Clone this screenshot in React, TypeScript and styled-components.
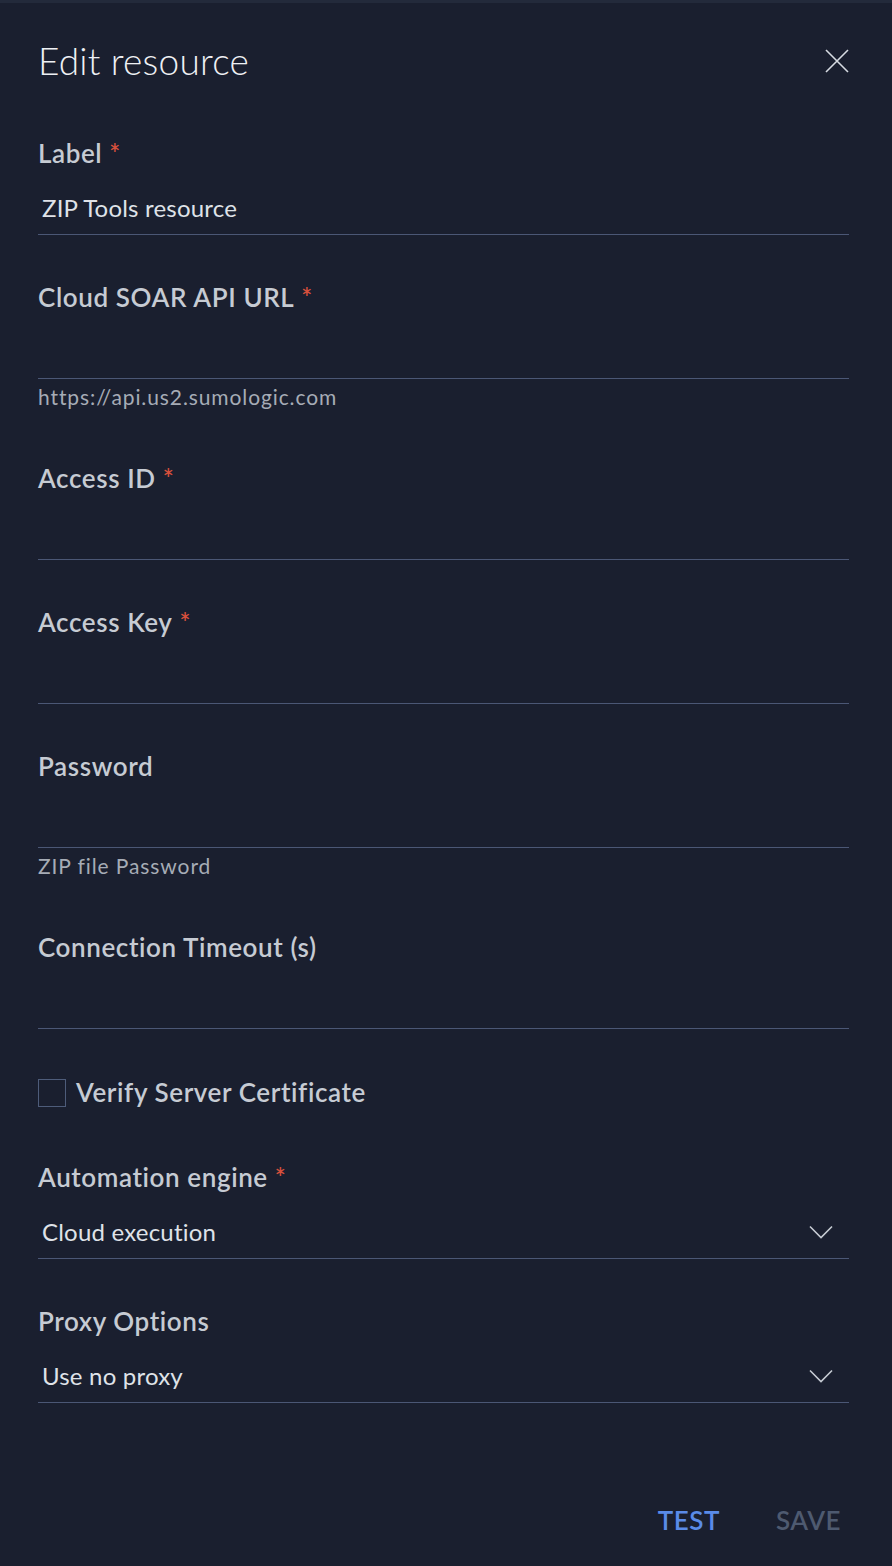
import React from "react";
import styled, { createGlobalStyle } from "styled-components";

const GlobalStyle = createGlobalStyle`
  html, body { margin: 0; padding: 0; background: #1a1f2f; }
  * { box-sizing: border-box; }
`;

const FONT = `Lato, "Open Sans", "Liberation Sans", sans-serif`;

const Panel = styled.div`
  min-height: 1566px;
  background: #1a1f2f;
  border-top: 3px solid #232a3b;
  padding: 38px 43px 0 38px;
  display: flex;
  flex-direction: column;
  font-family: ${FONT};
`;

const Header = styled.div`
  height: 40px;
  display: flex;
  align-items: center;
  justify-content: space-between;
`;

const Title = styled.h1`
  margin: 0;
  font-size: 37px;
  font-weight: 300;
  line-height: 40px;
  color: #eef0f4;
  letter-spacing: 0.2px;
`;

const CloseButton = styled.button`
  width: 24px;
  height: 24px;
  padding: 0;
  border: none;
  background: transparent;
  display: flex;
  align-items: center;
  justify-content: center;
  cursor: pointer;
`;

const Form = styled.div`
  margin-top: 58px;
  display: flex;
  flex-direction: column;
  gap: 48px;
`;

const Field = styled.div`
  display: flex;
  flex-direction: column;
`;

const Label = styled.label`
  font-size: 26px;
  font-weight: 600;
  line-height: 28px;
  padding-bottom: 2px;
  color: #c6cbd3;
  letter-spacing: 0.6px;
  white-space: nowrap;
`;

const Required = styled.span`
  color: #d8503c;
  margin-left: 7px;
`;

const InputBox = styled.div`
  margin-top: 16px;
  height: 50px;
  border-bottom: 1px solid #4b5775;
  display: flex;
  align-items: center;
  padding: 0 16px 3px 4px;
  gap: 8px;
`;

const Value = styled.span`
  flex: 1;
  font-size: 24px;
  line-height: 30px;
  color: #dfe2e8;
  letter-spacing: 0.2px;
`;

const Helper = styled.div`
  font-size: 21px;
  line-height: 36px;
  padding-bottom: 1px;
  color: #a6acb6;
  letter-spacing: 0.9px;
`;

const CheckRow = styled.div`
  display: flex;
  align-items: center;
  gap: 10px;
  height: 30px;
  margin-top: 1px;
  margin-bottom: 7px;
`;

const CheckBox = styled.span`
  width: 28px;
  height: 28px;
  border: 1px solid #4e5c7a;
  display: inline-block;
`;

const Footer = styled.div`
  margin-top: 97px;
  height: 40px;
  display: flex;
  justify-content: flex-end;
  align-items: center;
  gap: 40px;
`;

const FooterButton = styled.button<{ $primary?: boolean }>`
  border: none;
  background: transparent;
  padding: 0 8px;
  font-family: ${FONT};
  font-size: 26px;
  font-weight: 600;
  letter-spacing: 0.5px;
  line-height: 40px;
  color: ${(p) => (p.$primary ? "#5a8be8" : "#4e5a70")};
  cursor: pointer;
`;

const Chevron = () => (
  <svg width="24" height="14" viewBox="0 0 24 14" fill="none">
    <polyline points="1,1.5 12,12.5 23,1.5" stroke="#c6cbd3" strokeWidth="1.6" />
  </svg>
);

type FieldDef = {
  label: string;
  required?: boolean;
  value?: string;
  helper?: string;
  select?: boolean;
};

const fieldsTop: FieldDef[] = [
  { label: "Label", required: true, value: "ZIP Tools resource" },
  { label: "Cloud SOAR API URL", required: true, helper: "https://api.us2.sumologic.com" },
  { label: "Access ID", required: true },
  { label: "Access Key", required: true },
  { label: "Password", helper: "ZIP file Password" },
  { label: "Connection Timeout (s)" },
];

const fieldsBottom: FieldDef[] = [
  { label: "Automation engine", required: true, value: "Cloud execution", select: true },
  { label: "Proxy Options", value: "Use no proxy", select: true },
];

const FormField = ({ f }: { f: FieldDef }) => (
  <Field>
    <Label>
      {f.label}
      {f.required && <Required>*</Required>}
    </Label>
    <InputBox>
      <Value>{f.value ?? ""}</Value>
      {f.select && <Chevron />}
    </InputBox>
    {f.helper && <Helper>{f.helper}</Helper>}
  </Field>
);

export default function App() {
  return (
    <>
      <GlobalStyle />
      <Panel>
        <Header>
          <Title>Edit resource</Title>
          <CloseButton aria-label="Close">
            <svg width="24" height="24" viewBox="0 0 24 24" fill="none">
              <path d="M1 1 L23 23 M23 1 L1 23" stroke="#d7dbe2" strokeWidth="1.6" />
            </svg>
          </CloseButton>
        </Header>
        <Form>
          {fieldsTop.map((f) => (
            <FormField key={f.label} f={f} />
          ))}
          <CheckRow>
            <CheckBox />
            <Label as="span">Verify Server Certificate</Label>
          </CheckRow>
          {fieldsBottom.map((f) => (
            <FormField key={f.label} f={f} />
          ))}
        </Form>
        <Footer>
          <FooterButton $primary>TEST</FooterButton>
          <FooterButton>SAVE</FooterButton>
        </Footer>
      </Panel>
    </>
  );
}
